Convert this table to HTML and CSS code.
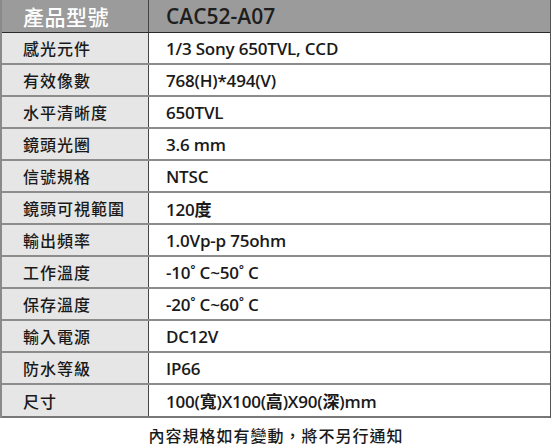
FILE: index.html
```html
<!DOCTYPE html>
<html>
<head>
<meta charset="utf-8">
<link rel="stylesheet" href="styles.css">
</head>
<body>
<div class="spec">
  <div class="row head"><div class="k">產品型號</div><div class="v">CAC52-A07</div></div>
  <div class="row"><div class="k">感光元件</div><div class="v">1/3 Sony 650TVL, CCD</div></div>
  <div class="row"><div class="k">有效像數</div><div class="v">768(H)*494(V)</div></div>
  <div class="row"><div class="k">水平清晰度</div><div class="v">650TVL</div></div>
  <div class="row"><div class="k">鏡頭光圈</div><div class="v">3.6 mm</div></div>
  <div class="row"><div class="k">信號規格</div><div class="v">NTSC</div></div>
  <div class="row"><div class="k">鏡頭可視範圍</div><div class="v">120度</div></div>
  <div class="row"><div class="k">輸出頻率</div><div class="v">1.0Vp-p 75ohm</div></div>
  <div class="row"><div class="k">工作溫度</div><div class="v">-10˚ C~50˚ C</div></div>
  <div class="row"><div class="k">保存溫度</div><div class="v">-20˚ C~60˚ C</div></div>
  <div class="row"><div class="k">輸入電源</div><div class="v">DC12V</div></div>
  <div class="row"><div class="k">防水等級</div><div class="v">IP66</div></div>
  <div class="row last"><div class="k">尺寸</div><div class="v">100(寬)X100(高)X90(深)mm</div></div>
</div>
<p class="note">內容規格如有變動，將不另行通知</p>
</body>
</html>
```

FILE: styles.css
```css
html, body {
  margin: 0;
  padding: 0;
  background: #ffffff;
}
body {
  width: 552px;
  font-family: "Open Sans", "Noto Sans CJK TC", sans-serif;
  color: #1a1a1a;
}
.spec {
  width: 551px;
  border-left: 2px solid #8a8a8a;
  border-right: 1px solid #555;
  box-sizing: border-box;
}
.row {
  display: grid;
  grid-template-columns: 147px 1fr;
  height: 32px;
  border-bottom: 2px solid #8c8c8c;
  box-sizing: border-box;
}
.row .k {
  background: #e6e6e6;
  border-right: 1px solid #444;
  display: flex;
  align-items: center;
  padding-left: 21px;
  font-family: "Noto Sans CJK TC", sans-serif;
  font-weight: 500;
  font-size: 16px;
  letter-spacing: 1px;
}
.row .v {
  display: flex;
  align-items: center;
  padding-left: 17px;
  font-family: "Open Sans", "Noto Sans CJK TC", sans-serif;
  font-weight: 600;
  font-size: 17px;
  letter-spacing: -0.2px;
  white-space: pre;
}
.row.head {
  background: #9b9b9b;
  height: 33px;
  border-bottom: 1px solid #2a2a2a;
}
.row.head .k {
  background: #9b9b9b;
  color: #ffffff;
  font-size: 21px;
  letter-spacing: 0.5px;
  border-right: 1px solid #444;
}
.row.head .v {
  font-size: 21px;
  font-weight: 600;
  color: #1e1e1e;
  letter-spacing: 0;
}
.row.last {
  height: 33px;
  border-bottom: 2px solid #777;
}
.note {
  margin: 7px 0 0;
  line-height: 20px;
  text-align: center;
  font-family: "Noto Sans CJK TC", sans-serif;
  font-weight: 500;
  font-size: 16px;
  letter-spacing: 1px;
  color: #1a1a1a;
}
```
